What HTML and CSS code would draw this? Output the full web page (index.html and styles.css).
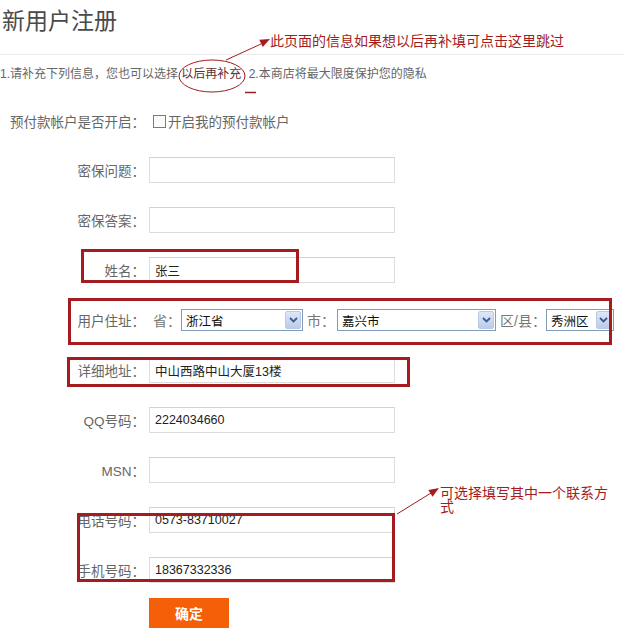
FILE: index.html
```html
<!DOCTYPE html>
<html lang="zh-CN">
<head>
<meta charset="utf-8">
<title>新用户注册</title>
<link rel="stylesheet" href="styles.css">
</head>
<body>
<div class="page">
  <h1 class="title">新用户注册</h1>
  <p class="intro">1.请补充下列信息，您也可以选择 <a class="later">以后再补充</a> 2.本商店将最大限度保护您的隐私</p>

  <form class="form">
    <div class="row row-first">
      <span class="lbl">预付款帐户是否开启：</span>
      <label class="check"><span class="box"></span>开启我的预付款帐户</label>
    </div>
    <div class="row"><span class="lbl">密保问题：</span><span class="field"></span></div>
    <div class="row"><span class="lbl">密保答案：</span><span class="field"></span></div>
    <div class="row"><span class="lbl">姓名：</span><span class="field">张三</span></div>
    <div class="row">
      <span class="lbl">用户住址：</span>
      <div class="addr">
        <span class="sub">省：</span>
        <span class="sel sel-prov"><span class="val">浙江省</span><span class="arr"><svg width="9" height="6" viewBox="0 0 9 6"><path d="M1 1 L4.5 4.5 L8 1" fill="none" stroke="#3e5a8a" stroke-width="1.8"/></svg></span></span>
        <span class="sub sub-city">市：</span>
        <span class="sel sel-city"><span class="val">嘉兴市</span><span class="arr"><svg width="9" height="6" viewBox="0 0 9 6"><path d="M1 1 L4.5 4.5 L8 1" fill="none" stroke="#3e5a8a" stroke-width="1.8"/></svg></span></span>
        <span class="sub sub-dist">区/县：</span>
        <span class="sel sel-dist"><span class="val">秀洲区</span><span class="arr"><svg width="9" height="6" viewBox="0 0 9 6"><path d="M1 1 L4.5 4.5 L8 1" fill="none" stroke="#3e5a8a" stroke-width="1.8"/></svg></span></span>
      </div>
    </div>
    <div class="row"><span class="lbl">详细地址：</span><span class="field">中山西路中山大厦13楼</span></div>
    <div class="row"><span class="lbl">QQ号码：</span><span class="field">2224034660</span></div>
    <div class="row"><span class="lbl">MSN：</span><span class="field"></span></div>
    <div class="row"><span class="lbl">电话号码：</span><span class="field">0573-83710027</span></div>
    <div class="row"><span class="lbl">手机号码：</span><span class="field">18367332336</span></div>
    <div class="actions"><button type="button" class="btn">确定</button></div>
  </form>

  <svg class="marks" width="624" height="635" viewBox="0 0 624 635">
    <g fill="none" stroke="#a41b20">
      <ellipse cx="212" cy="76" rx="33" ry="16" stroke-width="1"/>
      <line x1="226" y1="60" x2="261" y2="44" stroke-width="1"/>
      <line x1="245" y1="92.5" x2="256" y2="92.5" stroke-width="1.5"/>
      <line x1="397" y1="514" x2="431" y2="493" stroke-width="1"/>
      <rect x="82.5" y="250.5" width="215" height="31" stroke-width="3"/>
      <rect x="69.5" y="299.5" width="541" height="44" stroke-width="3"/>
      <rect x="68.5" y="358.5" width="340" height="27" stroke-width="3"/>
      <rect x="78.5" y="514.5" width="315" height="66" stroke-width="3"/>
    </g>
    <polygon points="270,39 262.7,46.9 259.3,39.7" fill="#a41b20"/>
    <polygon points="439,488 432.6,496.7 428.4,489.9" fill="#a41b20"/>
  </svg>
  <div class="note note-top">此页面的信息如果想以后再补填可点击这里跳过</div>
  <div class="note note-side">可选择填写其中一个联系方式</div>
</div>
</body>
</html>
```

FILE: styles.css
```css
html, body {
  margin: 0;
  padding: 0;
  background: #fff;
}

.page {
  position: relative;
  width: 624px;
  height: 635px;
  overflow: hidden;
  font-family: "Liberation Sans", "Noto Sans CJK SC", sans-serif;
  color: #666;
}

.title {
  margin: 0;
  height: 55px;
  box-sizing: border-box;
  padding: 4px 0 0 2px;
  font-size: 23px;
  line-height: 30px;
  font-weight: normal;
  color: #4a4a4a;
  font-family: "Noto Sans CJK SC", sans-serif;
  border-bottom: 1px solid #ececec;
}

.intro {
  margin: 12px 0 0 0;
  font-size: 12px;
  line-height: 14px;
  color: #666;
  white-space: nowrap;
}

.later {
  color: #5c3030;
  margin: 0 4px 0 0;
}

.form {
  margin: 0;
  padding-top: 16px;
}

.row {
  display: flex;
  align-items: center;
  height: 50px;
}

.row-first {
  height: 48px;
}

.lbl {
  width: 145px;
  flex: none;
  text-align: right;
  font-size: 13.5px;
  color: #666;
  white-space: nowrap;
}

.check {
  display: flex;
  align-items: center;
  margin-left: 8px;
  font-size: 13.5px;
  color: #666;
}

.box {
  width: 11px;
  height: 11px;
  border: 1px solid #7a7a7a;
  background: #fbfbfb;
  margin-right: 2px;
}

.field {
  display: flex;
  align-items: center;
  box-sizing: border-box;
  width: 246px;
  height: 26px;
  margin-left: 4px;
  padding-left: 5px;
  border: 1px solid #dcdcdc;
  border-top-color: #d2d2d2;
  background: #fff;
  font-size: 12.5px;
  color: #222;
}

.addr {
  display: flex;
  align-items: center;
  margin-left: 8px;
  font-size: 14px;
  color: #777;
}

.sub {
  white-space: nowrap;
}

.sub-city {
  margin-left: 4px;
  margin-right: 2px;
}

.sub-dist {
  margin-left: 4px;
}

.sel {
  display: flex;
  align-items: center;
  justify-content: space-between;
  box-sizing: border-box;
  height: 22px;
  border: 1px solid #7f9db9;
  background: #fff;
  padding: 1px;
}

.sel-prov { width: 122px; }
.sel-city { width: 159px; }
.sel-dist { width: 68px; }

.val {
  padding-left: 3px;
  font-size: 12.5px;
  color: #111;
  white-space: nowrap;
}

.arr {
  display: flex;
  align-items: center;
  justify-content: center;
  width: 16px;
  height: 18px;
  box-sizing: border-box;
  border: 1px solid #b9c9e6;
  border-radius: 2px;
  background: linear-gradient(#dde7f8, #bccbea);
}

.actions {
  padding: 3px 0 0 149px;
}

.btn {
  display: block;
  width: 80px;
  height: 30px;
  border: 0;
  padding: 0;
  background: #f45f08;
  color: #fff;
  font-family: "Noto Sans CJK SC", sans-serif;
  font-size: 14px;
  font-weight: bold;
}

.marks {
  position: absolute;
  left: 0;
  top: 0;
  pointer-events: none;
}

.note {
  position: absolute;
  font-family: "Noto Sans CJK SC", sans-serif;
  font-size: 14px;
  line-height: 14px;
  color: #a41b20;
}

.note-top {
  left: 270px;
  top: 33px;
  white-space: nowrap;
}

.note-side {
  left: 440px;
  top: 485px;
  width: 172px;
}
```
